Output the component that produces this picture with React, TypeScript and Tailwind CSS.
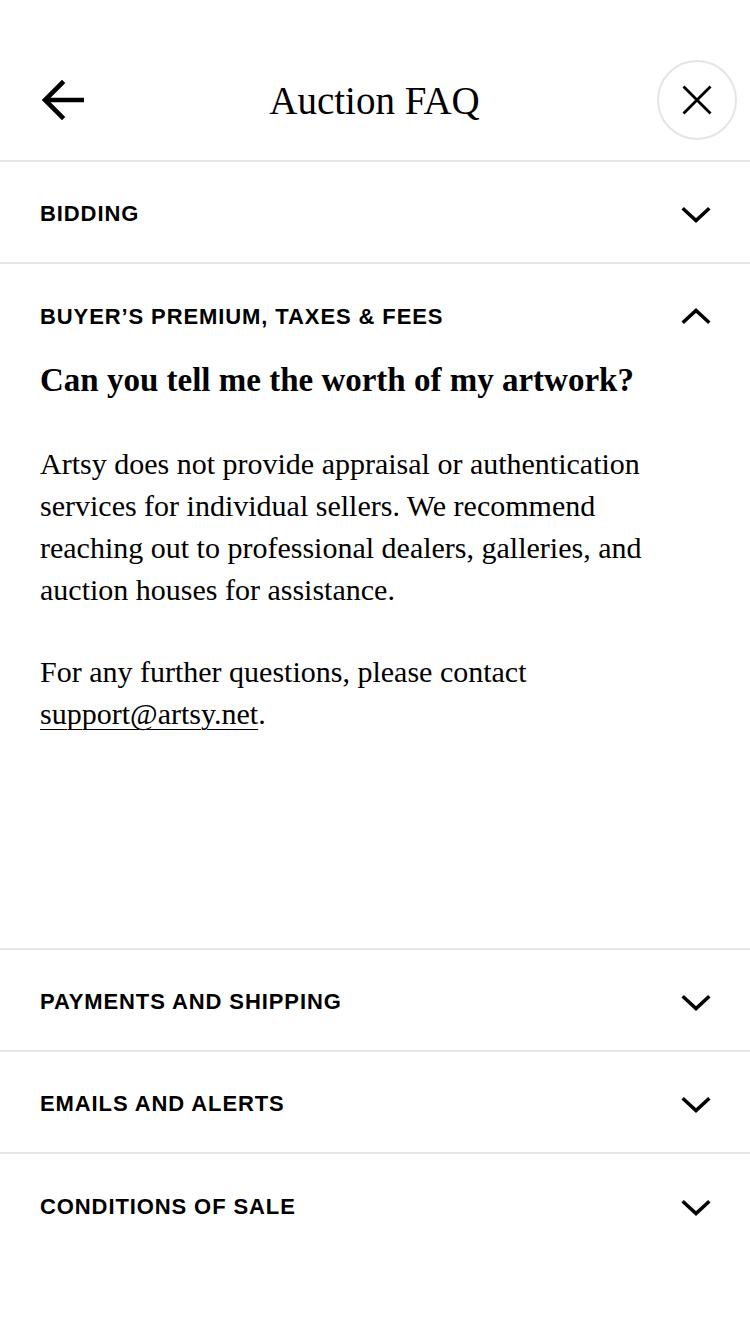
import { useState } from "react";

const serif = "font-['Liberation_Serif',serif]";
const sans = "font-['Liberation_Sans',Arial,sans-serif]";

const sections = [
  "Bidding",
  "Buyer’s Premium, Taxes & Fees",
  "Payments and Shipping",
  "Emails and Alerts",
  "Conditions of Sale",
];

const Chevron = ({ up }: { up?: boolean }) => (
  <svg width="30" height="18" viewBox="0 0 30 18" fill="none" className={up ? "rotate-180" : ""}>
    <path d="M3 3.5 L15 14.5 L27 3.5" stroke="#000" strokeWidth="3.6" strokeLinecap="square" />
  </svg>
);

const BackArrow = () => (
  <svg width="46" height="40" viewBox="0 0 46 40" fill="none">
    <path d="M44 20 H6" stroke="#000" strokeWidth="4.6" />
    <path d="M22 3 L5 20 L22 37" stroke="#000" strokeWidth="4.6" strokeLinecap="square" />
  </svg>
);

const CloseIcon = () => (
  <svg width="30" height="30" viewBox="0 0 30 30" fill="none">
    <path d="M1.5 1.5 L28.5 28.5 M28.5 1.5 L1.5 28.5" stroke="#000" strokeWidth="2.8" />
  </svg>
);

const App = () => {
  const [open, setOpen] = useState(1);

  return (
    <div className="min-h-[1334px] w-[750px] bg-white text-black">
      <header className="h-[162px] pt-[40px] px-[40px] flex items-center justify-between border-b-2 border-[#e5e5e5]">
        <button className="w-[46px] flex items-center">
          <BackArrow />
        </button>
        <h1 className={`${serif} text-[39px] leading-none ml-[6px]`}>Auction FAQ</h1>
        <button className="w-[80px] h-[80px] -mr-[27px] rounded-full border-2 border-[#e5e5e5] flex items-center justify-center">
          <CloseIcon />
        </button>
      </header>

      {sections.map((title, i) => {
        const isOpen = open === i;
        const last = i === sections.length - 1;
        return (
          <section
            key={title}
            className={`px-[40px] ${last ? "" : "border-b-2 border-[#e5e5e5]"} ${isOpen ? "pt-[40px] pb-[213px]" : "h-[102px] pt-[3px] flex items-center"}`}
          >
            <button
              onClick={() => setOpen(isOpen ? -1 : i)}
              className="w-full h-[24px] flex items-center justify-between"
            >
              <span className={`${sans} font-bold uppercase text-[22px] tracking-[0.9px]`}>{title}</span>
              <span className={`mr-[-1px] ${isOpen ? "" : "pt-[2px]"}`}>
                <Chevron up={isOpen} />
              </span>
            </button>

            {isOpen && (
              <div className={serif}>
                <h3 className="mt-[32px] text-[33px] leading-[40px] font-bold">
                  Can you tell me the worth of my artwork?
                </h3>
                <p className="mt-[43px] text-[30px] leading-[42px] whitespace-nowrap">
                  Artsy does not provide appraisal or authentication
                  <br />
                  services for individual sellers. We recommend
                  <br />
                  reaching out to professional dealers, galleries, and
                  <br />
                  auction houses for assistance.
                </p>
                <p className="mt-[40px] text-[30px] leading-[42px]">
                  For any further questions, please contact
                  <br />
                  <a className="underline decoration-1 underline-offset-[5px]">support@artsy.net</a>.
                </p>
              </div>
            )}
          </section>
        );
      })}
    </div>
  );
};

export default App;
